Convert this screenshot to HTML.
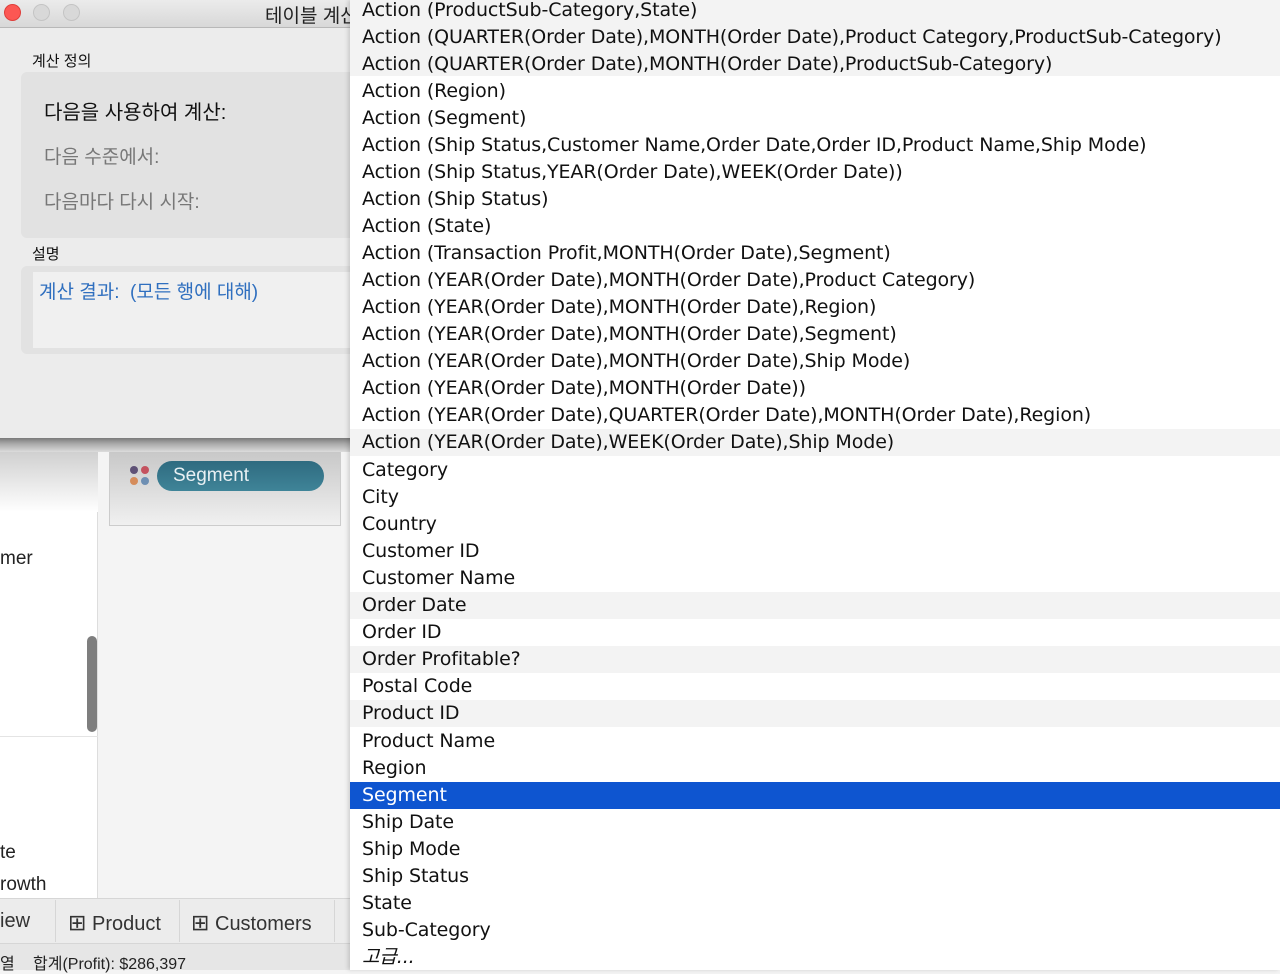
<!DOCTYPE html>
<html><head><meta charset="utf-8"><style>
*{margin:0;padding:0;box-sizing:border-box}
body{width:1280px;height:970px;overflow:hidden;position:relative;background:#f4f4f4;font-family:"Liberation Sans","Noto Sans CJK KR",sans-serif}
.abs{position:absolute}
#menu{position:absolute;left:350px;top:0;width:930px;height:970px;background:#fff;overflow:hidden;box-shadow:-2px 0 4px rgba(0,0,0,.15)}
.r{position:absolute;left:0;width:930px;height:27px;line-height:27px;padding-left:12px;font-family:"DejaVu Sans","Noto Sans CJK KR",sans-serif;font-size:19px;color:#111;white-space:nowrap;letter-spacing:-0.1px}
.g{background:#f3f3f3}
.sel{background:#0e55d0;color:#fff}
</style></head><body>
<div class="abs" style="left:0;top:0;width:350px;height:440px;background:#ececec"></div>
<div class="abs" style="left:0;top:0;width:350px;height:28px;background:linear-gradient(#ebebeb,#d8d8d8);border-bottom:1px solid #b8b8b8"></div>
<div class="abs" style="left:4px;top:4px;width:17px;height:17px;border-radius:50%;background:#fc5753;border:1px solid #df3e3a"></div>
<div class="abs" style="left:33px;top:4px;width:17px;height:17px;border-radius:50%;background:#d8d8d8;border:1px solid #c4c4c4"></div>
<div class="abs" style="left:63px;top:4px;width:17px;height:17px;border-radius:50%;background:#d8d8d8;border:1px solid #c4c4c4"></div>
<div class="abs" style="left:265px;top:1px;font-size:19px;color:#222">테이블 계산</div>
<div class="abs" style="left:32px;top:50px;font-size:15px;color:#111">계산 정의</div>
<div class="abs" style="left:21px;top:72px;width:340px;height:166px;background:#e2e2e2;border-radius:6px"></div>
<div class="abs" style="left:44px;top:96px;font-size:20px;color:#111">다음을 사용하여 계산:</div>
<div class="abs" style="left:44px;top:142px;font-size:19px;color:#777">다음 수준에서:</div>
<div class="abs" style="left:44px;top:187px;font-size:19px;color:#777">다음마다 다시 시작:</div>
<div class="abs" style="left:32px;top:243px;font-size:15px;color:#111">설명</div>
<div class="abs" style="left:21px;top:266px;width:340px;height:88px;background:#e2e2e2;border-radius:6px"></div>
<div class="abs" style="left:33px;top:272px;width:320px;height:76px;background:#f0f0f0"></div>
<div class="abs" style="left:39px;top:277px;font-size:19px;color:#2f6fbf">계산 결과:&nbsp; (모든 행에 대해)</div>
<div class="abs" style="left:0;top:438px;width:350px;height:14px;background:linear-gradient(#7a7a7a,#a8a8a8 40%,#dcdcdc)"></div>
<div class="abs" style="left:0;top:452px;width:98px;height:446px;background:#fff;border-right:1px solid #ddd"></div>
<div class="abs" style="left:0;top:452px;width:98px;height:60px;background:linear-gradient(#d0d0d0,#fff)"></div>
<div class="abs" style="left:0;top:736px;width:98px;height:1px;background:#e4e4e4"></div>
<div class="abs" style="left:87px;top:636px;width:10px;height:96px;border-radius:5px;background:#7e7e7e"></div>
<div class="abs" style="left:0;top:548px;font-size:19px;color:#222">mer</div>
<div class="abs" style="left:0;top:842px;font-size:19px;color:#222">te</div>
<div class="abs" style="left:0;top:874px;font-size:19px;color:#222">rowth</div>
<div class="abs" style="left:99px;top:452px;width:251px;height:446px;background:#f4f4f4"></div>
<div class="abs" style="left:109px;top:452px;width:232px;height:74px;background:linear-gradient(#c8c8c8,#f0f0f0);border:1px solid #ccc;border-top:none"></div>
<div class="abs" style="left:130px;top:466px;width:8px;height:8px;border-radius:50%;background:#5e5176"></div>
<div class="abs" style="left:141px;top:466px;width:8px;height:8px;border-radius:50%;background:#c4525f"></div>
<div class="abs" style="left:130px;top:477px;width:8px;height:8px;border-radius:50%;background:#d58c5b"></div>
<div class="abs" style="left:141px;top:477px;width:8px;height:8px;border-radius:50%;background:#6e8fb3"></div>
<div class="abs" style="left:157px;top:461px;width:167px;height:30px;border-radius:15px;background:linear-gradient(#2f6b80,#3f8498);color:#e8f0f3;font-size:19px;line-height:30px;padding-left:16px">Segment</div>
<div class="abs" style="left:0;top:898px;width:350px;height:46px;background:#ececec;border-top:1px solid #d6d6d6;border-bottom:1px solid #d6d6d6"></div>
<div class="abs" style="left:55px;top:900px;width:1px;height:42px;background:#d6d6d6"></div>
<div class="abs" style="left:179px;top:900px;width:1px;height:42px;background:#d6d6d6"></div>
<div class="abs" style="left:334px;top:900px;width:1px;height:42px;background:#d6d6d6"></div>
<div class="abs" style="left:0;top:910px;font-size:20px;color:#333">iew</div>
<div class="abs" style="left:68px;top:910px;font-size:20px;color:#333"><span style="font-size:22px">⊞</span> Product</div>
<div class="abs" style="left:191px;top:910px;font-size:20px;color:#333"><span style="font-size:22px">⊞</span> Customers</div>
<div class="abs" style="left:0;top:944px;width:350px;height:26px;background:#e6e6e6"></div>
<div class="abs" style="left:0;top:950px;font-size:16px;color:#222">열</div>
<div class="abs" style="left:33px;top:950px;font-size:16px;color:#222">합계(Profit): $286,397</div>
<div id="menu">
<div class="abs g" style="left:0;top:0;width:930px;height:76px"></div>
<div class="r" style="top:-3px">Action (ProductSub-Category,State)</div>
<div class="r" style="top:24px">Action (QUARTER(Order Date),MONTH(Order Date),Product Category,ProductSub-Category)</div>
<div class="r" style="top:51px">Action (QUARTER(Order Date),MONTH(Order Date),ProductSub-Category)</div>
<div class="r" style="top:78px">Action (Region)</div>
<div class="r" style="top:105px">Action (Segment)</div>
<div class="r" style="top:132px">Action (Ship Status,Customer Name,Order Date,Order ID,Product Name,Ship Mode)</div>
<div class="r" style="top:159px">Action (Ship Status,YEAR(Order Date),WEEK(Order Date))</div>
<div class="r" style="top:186px">Action (Ship Status)</div>
<div class="r" style="top:213px">Action (State)</div>
<div class="r" style="top:240px">Action (Transaction Profit,MONTH(Order Date),Segment)</div>
<div class="r" style="top:267px">Action (YEAR(Order Date),MONTH(Order Date),Product Category)</div>
<div class="r" style="top:294px">Action (YEAR(Order Date),MONTH(Order Date),Region)</div>
<div class="r" style="top:321px">Action (YEAR(Order Date),MONTH(Order Date),Segment)</div>
<div class="r" style="top:348px">Action (YEAR(Order Date),MONTH(Order Date),Ship Mode)</div>
<div class="r" style="top:375px">Action (YEAR(Order Date),MONTH(Order Date))</div>
<div class="r" style="top:402px">Action (YEAR(Order Date),QUARTER(Order Date),MONTH(Order Date),Region)</div>
<div class="r g" style="top:429px">Action (YEAR(Order Date),WEEK(Order Date),Ship Mode)</div>
<div class="r" style="top:457px">Category</div>
<div class="r" style="top:484px">City</div>
<div class="r" style="top:511px">Country</div>
<div class="r" style="top:538px">Customer ID</div>
<div class="r" style="top:565px">Customer Name</div>
<div class="r g" style="top:592px">Order Date</div>
<div class="r" style="top:619px">Order ID</div>
<div class="r g" style="top:646px">Order Profitable?</div>
<div class="r" style="top:673px">Postal Code</div>
<div class="r g" style="top:700px">Product ID</div>
<div class="r" style="top:728px">Product Name</div>
<div class="r" style="top:755px">Region</div>
<div class="r sel" style="top:782px;height:27px">Segment</div>
<div class="r" style="top:809px">Ship Date</div>
<div class="r" style="top:836px">Ship Mode</div>
<div class="r" style="top:863px">Ship Status</div>
<div class="r" style="top:890px">State</div>
<div class="r" style="top:917px">Sub-Category</div>
<div class="r" style="top:944px;font-style:italic">고급...</div>
</div>
</body></html>
